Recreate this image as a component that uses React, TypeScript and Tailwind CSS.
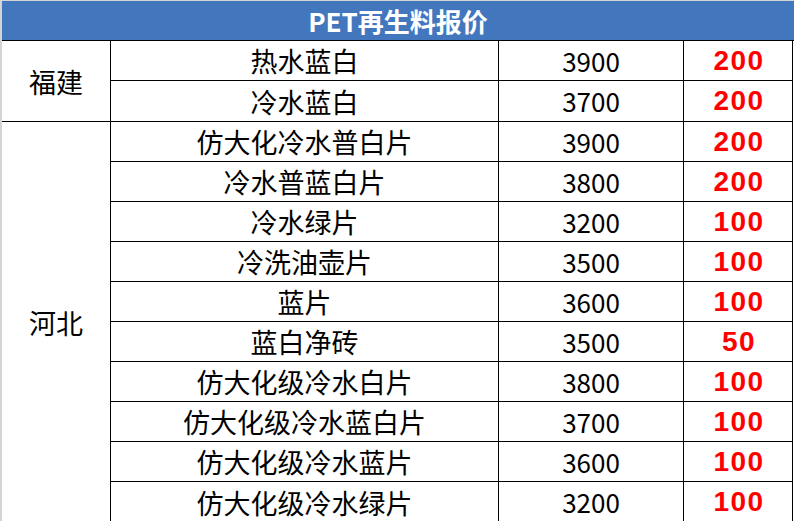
const groups = [
  {
    region: "福建",
    rows: [
      { name: "热水蓝白", price: "3900", diff: "200" },
      { name: "冷水蓝白", price: "3700", diff: "200" },
    ],
  },
  {
    region: "河北",
    rows: [
      { name: "仿大化冷水普白片", price: "3900", diff: "200" },
      { name: "冷水普蓝白片", price: "3800", diff: "200" },
      { name: "冷水绿片", price: "3200", diff: "100" },
      { name: "冷洗油壶片", price: "3500", diff: "100" },
      { name: "蓝片", price: "3600", diff: "100" },
      { name: "蓝白净砖", price: "3500", diff: "50" },
      { name: "仿大化级冷水白片", price: "3800", diff: "100" },
      { name: "仿大化级冷水蓝白片", price: "3700", diff: "100" },
      { name: "仿大化级冷水蓝片", price: "3600", diff: "100" },
      { name: "仿大化级冷水绿片", price: "3200", diff: "100" },
    ],
  },
];

const cjk = "font-['Noto_Sans_CJK_SC','Noto_Sans',sans-serif]";

export default function App() {
  return (
    <div className={`w-[794px] h-[521px] bg-white border-t border-[#d4d4d4] border-l-2 overflow-hidden ${cjk}`}>
      <div className="h-[40px] bg-[#4277be] border-b border-black flex items-center justify-center text-white text-[26px] font-bold leading-none">
        PET再生料报价
      </div>
      <div className="flex flex-col w-[791px]">
        {groups.map((g) => (
          <div key={g.region} className="flex border-b border-black">
            <div className="w-[109px] border-r border-black flex items-center justify-center text-[27px] leading-none text-black">
              {g.region}
            </div>
            <div className="flex flex-col">
              {g.rows.map((r, i) => (
                <div
                  key={r.name}
                  className={`flex h-[40px] ${i < g.rows.length - 1 ? "border-b border-black" : "h-[39px]"}`}
                >
                  <div className="w-[388px] border-r border-black flex items-center justify-center text-[27px] leading-none text-black">
                    {r.name}
                  </div>
                  <div className="w-[185px] border-r border-black flex items-center justify-center text-[26px] leading-none text-black">
                    {r.price}
                  </div>
                  <div className="w-[109px] border-r border-black flex items-center justify-center pl-[2px] text-[28px] tracking-[1.5px] leading-none font-bold text-[#ff0000] font-['Liberation_Sans',Arial,sans-serif]">
                    {r.diff}
                  </div>
                </div>
              ))}
            </div>
          </div>
        ))}
      </div>
    </div>
  );
}
